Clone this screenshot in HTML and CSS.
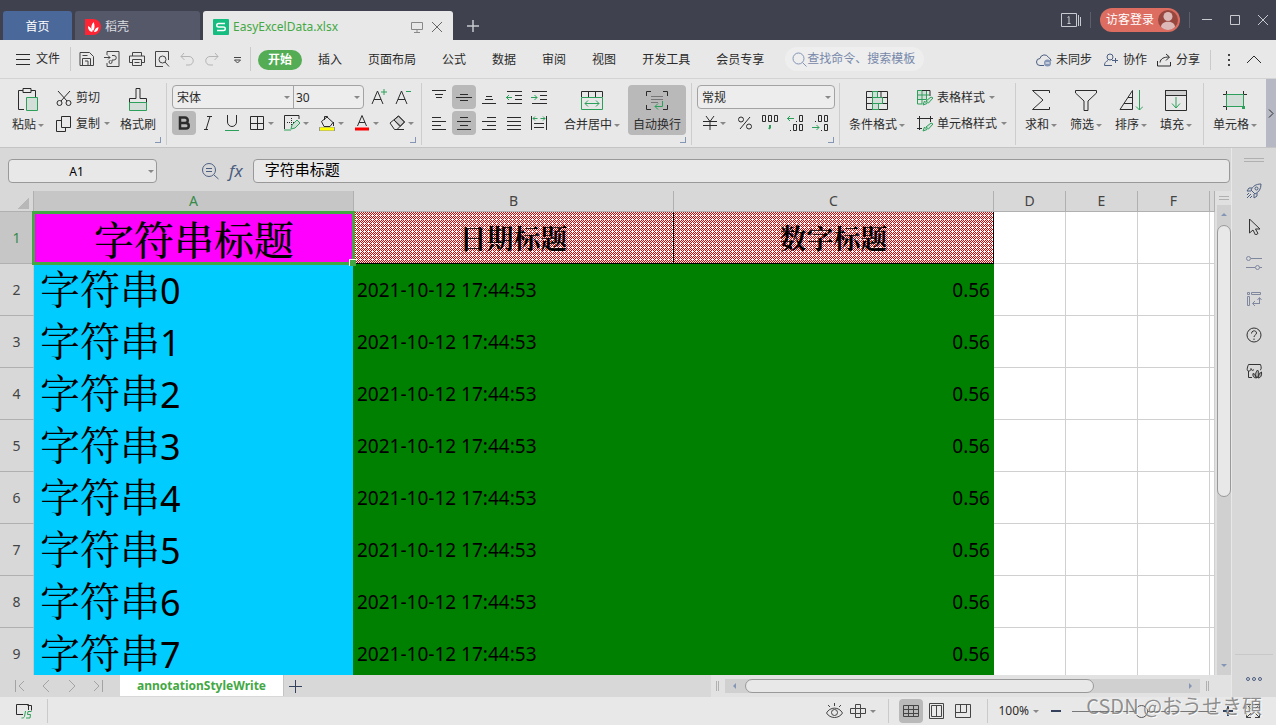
FILE: index.html
```html
<!DOCTYPE html>
<html lang="zh-CN">
<head>
<meta charset="utf-8">
<meta name="viewport" content="width=device-width, initial-scale=1">
<title>EasyExcelData.xlsx</title>
<link rel="stylesheet" href="styles.css">
</head>
<body>
<div class="app">
  <header class="titlebar">
    <nav class="doc-tabs">
      <button class="doc-tab home">首页</button>
      <button class="doc-tab docer">
        <svg class="flat" width="16" height="16" viewBox="0 0 16 16"><path d="M0 0h8a8 8 0 1 1 0 16H0z" fill="#ff2433"/><path d="M8 12C5.500 10 6 6 8.500 3c1.500 3 1.500 6.500-.5 9zM7.500 13C4 12.500 3 10 3 7c2.500 1 4 3 4.500 6zM9 13c.5-2.500 2-4.500 4.500-5 0 3-1.500 5-4.500 5z" fill="#fff"/></svg>
        稻壳
      </button>
      <div class="doc-tab active">
        <svg class="flat" width="16" height="16" viewBox="0 0 16 16"><rect width="16" height="16" rx="1" fill="#15bd80"/><path d="M12 4.500H5.500A1.500 1.500 0 0 0 5.500 8h5a1.500 1.500 0 0 1 0 3.500H4" fill="none" stroke="#fff" stroke-width="1.500"/></svg>
        <span class="doc-name">EasyExcelData.xlsx</span>
        <svg class="muted" width="12" height="12" viewBox="0 0 12 12"><path d="M.5 1.500h11v7H.5zM6 8.500v3M3 11.500h6"/></svg>
        <button class="plain" aria-label="关闭"><svg width="12" height="12" viewBox="0 0 12 12"><path d="M1 1l10 10M11 1L1 11"/></svg></button>
      </div>
      <button class="plain new-tab" aria-label="新建"><svg width="12" height="12" viewBox="0 0 12 12"><path d="M6 0v12M0 6h12" stroke-width="1.500"/></svg></button>
    </nav>
    <div class="window-tools">
      <svg width="20" height="16" viewBox="0 0 20 16"><path d="M.5 1.500h15v13H.5zM17.500 3v11M19.500 5v9M6.500 5.500l1.500-1v6.500M6.500 11.500h3"/></svg>
      <i class="tsep"></i>
      <button class="login">访客登录
        <svg class="flat" width="20" height="20" viewBox="0 0 20 20"><circle cx="10" cy="10" r="10" fill="#98473f"/><circle cx="10" cy="6.500" r="4.500" fill="#dcb9b6"/><path d="M3 17c0-7 14-7 14 0-4 4-10 4-14 0z" fill="#dcb9b6"/></svg>
      </button>
      <i class="tsep"></i>
      <button class="plain win" aria-label="最小化"><svg width="10" height="10" viewBox="0 0 10 10"><path d="M0 4.500h10"/></svg></button>
      <button class="plain win" aria-label="最大化"><svg width="10" height="10" viewBox="0 0 10 10"><path d="M.5.5h9v9h-9z"/></svg></button>
      <button class="plain win" aria-label="关闭窗口"><svg width="10" height="10" viewBox="0 0 10 10"><path d="M0 0l10 10M10 0L0 10"/></svg></button>
    </div>
  </header>

  <div class="menubar">
    <button class="plain file"><svg width="14" height="12" viewBox="0 0 14 12"><path d="M0 1.500h14M0 6.500h14M0 11.500h14"/></svg>文件</button>
    <i class="sep"></i>
    <div class="quick">
      <button class="plain" aria-label="保存"><svg width="16" height="16" viewBox="0 0 16 16"><path d="M1 1.500h9.500l4 4v9H1zM3.500 14V7.500h8V14M3.500 4.500h5M6 10h3v4"/></svg></button>
      <button class="plain" aria-label="输出为PDF"><svg width="16" height="16" viewBox="0 0 16 16"><path d="M3 4V.5h12v15H3V12M0 6.500h6M4 4.500l2 2-2 2M8 4.500h2a2 2 0 0 1 0 4.500H8v2a1.500 1.500 0 1 1-1.500-1.500"/></svg></button>
      <button class="plain" aria-label="打印"><svg width="16" height="16" viewBox="0 0 16 16"><path d="M3.500 5V1.500h9V5M3 11.500H.5V5h15v6.500H13M3.500 8.500h9v6h-9zM5.500 11.500h5"/></svg></button>
      <button class="plain" aria-label="打印预览"><svg width="16" height="16" viewBox="0 0 16 16"><path d="M9 15.500H1.500V.5h13V9"/><circle cx="8.500" cy="8.500" r="3.500"/><path d="M11 11l4 4.500"/></svg></button>
      <button class="plain off" aria-label="撤销"><svg width="16" height="16" viewBox="0 0 16 16"><path d="M5 2L2 5.500 5.500 9M2 5.500h8a4 4 0 0 1 0 8.500H7"/></svg></button>
      <button class="plain off" aria-label="恢复"><svg width="16" height="16" viewBox="0 0 16 16"><path d="M11 2l3 3.500L10.500 9M14 5.500H6A4 4 0 0 0 6 14h3"/></svg></button>
      <button class="plain" aria-label="更多"><svg width="16" height="16" viewBox="0 0 16 16"><path d="M5 6.500h7M5.500 9L8.500 12 11.500 9z"/></svg></button>
    </div>
    <i class="sep"></i>
    <nav class="tabs">
      <button class="plain current">开始</button>
      <button class="plain">插入</button>
      <button class="plain">页面布局</button>
      <button class="plain">公式</button>
      <button class="plain">数据</button>
      <button class="plain">审阅</button>
      <button class="plain">视图</button>
      <button class="plain">开发工具</button>
      <button class="plain">会员专享</button>
    </nav>
    <label class="search"><svg width="15" height="15" viewBox="0 0 15 15"><circle cx="6.500" cy="6.500" r="5.500"/><path d="M10.500 10.500L14.500 14.500"/></svg><input type="text" placeholder="查找命令、搜索模板" aria-label="查找命令、搜索模板"></label>
    <div class="share">
      <button class="plain sync"><svg class="blue" width="16" height="14" viewBox="0 0 16 14"><path d="M8 12.500H4a3.500 3.500 0 0 1 0-7 4.500 4.500 0 0 1 8.500-1A4 4 0 0 1 15 8"/><circle cx="11.500" cy="10" r="3.500" fill="#8495b5" stroke="none"/><path d="M9.500 10h4" stroke="#fff"/></svg>未同步</button>
      <button class="plain"><svg class="blue" width="15" height="14" viewBox="0 0 15 14"><circle cx="6" cy="4" r="3"/><path d="M4 7.500C1.500 8.500.5 10 .5 12.500H8M8 7.500h6M11.500 5v5"/></svg>协作</button>
      <button class="plain"><svg width="15" height="14" viewBox="0 0 15 14"><path d="M.5 8v5h13V9M3 9.500c.5-4 4-5.500 9-5.500M9 1l3.500 3L9 7.500"/></svg>分享</button>
      <i class="sep"></i>
      <button class="plain" aria-label="选项"><svg width="4" height="14" viewBox="0 0 4 14"><path d="M1 1h2v2H1zM1 6h2v2H1zM1 11h2v2H1z" fill="#444" stroke="none"/></svg></button>
      <button class="plain" aria-label="折叠"><svg width="14" height="10" viewBox="0 0 14 10"><path d="M0 8l7-7 7 7"/></svg></button>
    </div>
  </div>

  <div class="ribbon">
    <section class="group clip launch">
      <button class="big"><svg width="24" height="24" viewBox="0 0 24 24"><path d="M8 21.500H2.500v-19H7M15 2.500h4.500V9M7 .5h8v4H7z"/><path class="gs" d="M10.500 9.500h11v13h-11z"/></svg><span>粘贴<b class="caret"></b></span></button>
      <div class="stack">
        <button class="small"><svg width="16" height="16" viewBox="0 0 16 16"><path d="M2 1l9 10M14 1L5 11"/><circle cx="3.500" cy="13" r="2.500"/><circle cx="12.500" cy="13" r="2.500"/></svg>剪切</button>
        <button class="small"><svg width="16" height="16" viewBox="0 0 16 16"><path d="M5.500.5h9v11h-9zM5 4.500H.5v11h9V12"/></svg>复制<b class="caret"></b></button>
      </div>
      <button class="big painter"><svg width="24" height="24" viewBox="0 0 24 24"><path d="M3.500 15v-4.500H10V.5h4v10h6.500V15"/><path class="gs" d="M3.500 14.500h17v8h-17z"/></svg><span>格式刷</span></button>
    </section>

    <section class="group font launch">
      <div class="line">
        <div class="fields">
          <span class="sel fname"><select aria-label="字体"><option>宋体</option></select></span>
          <span class="sel fsize"><select aria-label="字号"><option>30</option></select></span>
        </div>
        <button class="tool" aria-label="增大字号"><svg width="16" height="16" viewBox="0 0 16 16"><path d="M1 15L6.500 2 12 15M3 10.500h7"/><path class="g" d="M10 3h6M13 0v6"/></svg></button>
        <button class="tool" aria-label="减小字号"><svg width="16" height="16" viewBox="0 0 16 16"><path d="M1 15L6.500 2 12 15M3 10.500h7"/><path class="g" d="M11 2.500h5"/></svg></button>
      </div>
      <div class="line">
        <button class="tool on" aria-label="加粗"><svg width="14" height="14" viewBox="0 0 14 14"><path d="M3 1.500h5a2.500 2.500 0 0 1 0 5.500H3zM3 7h6a2.500 2.500 0 0 1 0 5.500H3z" stroke-width="2.500"/></svg></button>
        <button class="tool" aria-label="倾斜"><svg width="14" height="16" viewBox="0 0 14 16"><path d="M6 1.500h5M3 14.500h4M9 1.500L5 14.500"/></svg></button>
        <button class="tool" aria-label="下划线"><svg width="16" height="16" viewBox="0 0 16 16"><path d="M3.500 0v7a4.500 4.500 0 0 0 9 0V0"/><path class="g" d="M1 15.500h14"/></svg></button>
        <button class="tool wide" aria-label="边框"><svg width="16" height="16" viewBox="0 0 16 16"><path d="M1.500 1.500h13v13h-13zM8.500 1v14M1 8.500h14"/></svg><b class="caret"></b></button>
        <button class="tool wide" aria-label="绘制边框"><svg width="16" height="16" viewBox="0 0 16 16"><path d="M.5 14V.5H15V4"/><path d="M3 7.500h7M7.500 3v8" stroke-dasharray="1 1"/><path class="gs" d="M7 14l1-4 5-5 3 3-5 5z"/><path class="g" d="M0 15h7"/></svg><b class="caret"></b></button>
        <button class="tool wide" aria-label="填充颜色"><svg width="16" height="16" viewBox="0 0 16 16"><path d="M2.500 6.500L8 2l6 5.500-3 4H5zM5.500 5V1.500h3V3M14.500 7v4"/><path d="M0 14h16" stroke="#999" stroke-width="4"/><path d="M1 14h14" stroke="#ff0" stroke-width="3"/></svg><b class="caret"></b></button>
        <button class="tool wide" aria-label="字体颜色"><svg width="16" height="16" viewBox="0 0 16 16"><path d="M3.500 11L8 .5l4.500 10.500M5 7.500h6"/><path d="M1 14h14" stroke="#f00" stroke-width="3"/></svg><b class="caret"></b></button>
        <button class="tool wide" aria-label="清除"><svg width="16" height="16" viewBox="0 0 16 16"><path d="M5 5l4.500-4 6 6-4 4z" fill="#d0d0d0"/><path d="M1 8l8.500-7 6 6L8 14.500H5.500zM5 5l6 6.500M8 14.500h7"/></svg><b class="caret"></b></button>
      </div>
    </section>

    <section class="group align launch">
      <div class="pad5">
        <button class="tool" aria-label="顶端对齐"><svg width="16" height="16" viewBox="0 0 16 16"><path d="M1 1.500h14M4 5.500h8M5 8.500h6"/></svg></button>
        <button class="tool on" aria-label="垂直居中"><svg width="16" height="16" viewBox="0 0 16 16"><path d="M4 5.500h8M0 8.500h16M4 11.500h8"/></svg></button>
        <button class="tool" aria-label="底端对齐"><svg width="16" height="16" viewBox="0 0 16 16"><path d="M5 7.500h6M4 10.500h8M1 14.500h14"/></svg></button>
        <button class="tool" aria-label="减少缩进"><svg width="16" height="16" viewBox="0 0 16 16"><path d="M1 2.500h15M9 6.500h7M9 10.500h7M1 14.500h15"/><path class="g" d="M0 8.500h6M3 6L.5 8.500 3 11"/></svg></button>
        <button class="tool" aria-label="增加缩进"><svg width="16" height="16" viewBox="0 0 16 16"><path d="M1 2.500h15M9 6.500h7M9 10.500h7M1 14.500h15"/><path class="g" d="M0 8.500h6M3.500 6L6 8.500 3.500 11"/></svg></button>
        <button class="tool" aria-label="左对齐"><svg width="16" height="16" viewBox="0 0 16 16"><path d="M1 2.500h9M1 6.500h14M1 10.500h9M1 14.500h14"/></svg></button>
        <button class="tool on" aria-label="水平居中"><svg width="16" height="16" viewBox="0 0 16 16"><path d="M4 2.500h8M1 6.500h14M4 10.500h8M1 14.500h14"/></svg></button>
        <button class="tool" aria-label="右对齐"><svg width="16" height="16" viewBox="0 0 16 16"><path d="M6 2.500h9M1 6.500h14M6 10.500h9M1 14.500h14"/></svg></button>
        <button class="tool" aria-label="两端对齐"><svg width="16" height="16" viewBox="0 0 16 16"><path d="M1 2.500h14M1 6.500h14M1 10.500h14M1 14.500h14"/></svg></button>
        <button class="tool" aria-label="分散对齐"><svg width="16" height="16" viewBox="0 0 16 16"><path d="M.5 1v14M15.500 1v14M3 8.500h10M3 12.500h10"/><path class="g" d="M2 3.500h4.500M9.500 3.500H14M4 1.500l-2 2 2 2M12 1.500l2 2-2 2"/></svg></button>
      </div>
      <button class="big merge"><svg width="24" height="24" viewBox="0 0 24 24"><path d="M1.500 9V3.500h21V9M8.500 3.500V9M15.500 3.500V9"/><path class="g" d="M1.500 9.500h21v12h-21zM5 15.500h14M8 12.500l-3 3 3 3M16 12.500l3 3-3 3"/></svg><span>合并居中<b class="caret"></b></span></button>
      <button class="big on"><svg width="24" height="24" viewBox="0 0 24 24"><path d="M1.500 8V3.500H6M18 3.500h4.500V8M1.500 17v4.500H6M18 21.500h4.500V17"/><path d="M6 8.500h12M6 11.500h12M6 14.500h7" stroke="#777"/><path class="g" d="M17.500 13v5.500H10M13 15.500l-3 3 3 3"/></svg><span>自动换行</span></button>
    </section>

    <section class="group number launch">
      <div class="fields"><span class="sel nfmt"><select aria-label="数字格式"><option>常规</option></select></span></div>
      <div class="line">
        <button class="tool wide" aria-label="货币"><svg width="14" height="14" viewBox="0 0 14 14"><path d="M3 0l4 5.500L11 0M0 5.500h14M0 9.500h14M7 5.500V14"/></svg><b class="caret"></b></button>
        <button class="tool" aria-label="百分比"><svg width="14" height="14" viewBox="0 0 14 14"><circle cx="3" cy="3.500" r="2.500"/><circle cx="11" cy="10.500" r="2.500"/><path d="M12 1L2 13"/></svg></button>
        <button class="tool" aria-label="千位分隔"><svg width="18" height="16" viewBox="0 0 18 16"><path d="M1.500.5h3v6h-3zM7.500.5h3v6h-3zM13.500.5h3v6h-3z"/><path class="g" d="M9 10v2.500L8 14" stroke-width="2"/></svg></button>
        <button class="tool" aria-label="增加小数位"><svg width="16" height="16" viewBox="0 0 16 16"><path d="M12.500.5h3v6h-3zM6.500 9.500h3v6h-3zM12.500 9.500h3v6h-3zM9 6.500h1M3 15.500h1"/><path class="g" d="M0 3.500h7M3 1L.5 3.500 3 6"/></svg></button>
        <button class="tool" aria-label="减少小数位"><svg width="16" height="16" viewBox="0 0 16 16"><path d="M6.500.5h3v6h-3zM12.500.5h3v6h-3zM12.500 9.500h3v6h-3zM3 6.500h1M9 15.500h1"/><path class="g" d="M0 12.500h7M4.500 10L7 12.500 4.500 15"/></svg></button>
      </div>
    </section>

    <section class="group styles">
      <button class="big"><svg width="24" height="24" viewBox="0 0 24 24"><path d="M1.500 3.500h21v18h-21zM1.500 9.500h21M1.500 15.500h21M16 3.500v6"/><path class="gs" d="M7.500 3.500h5v6h-5zM7.500 9.500h10v6h-10zM7.500 15.500h6v6h-6z"/></svg><span>条件格式<b class="caret"></b></span></button>
      <div class="stack">
        <button class="small"><svg width="16" height="16" viewBox="0 0 16 16"><path class="gs" d="M.5.5h9v9h-9z"/><path class="g" d="M.5.5V14H5M.5 5h12M5 .5V14M9.500.5V9"/><path d="M5 .5h8V6"/><path class="gs" d="M6 15l1.500-4 2.500 2.500zM9 11l5-4 2 1-4.500 5z"/></svg>表格样式<b class="caret"></b></button>
        <button class="small"><svg width="16" height="16" viewBox="0 0 16 16"><path d="M0 2.500h16M2.500 0v14M0 12.500h5M13.500 0v6"/><path class="gs" d="M6 15l1.500-4 2.500 2.500zM9 11l5-4 2 1-4.500 5z"/></svg>单元格样式<b class="caret"></b></button>
      </div>
    </section>

    <section class="group edit">
      <button class="big"><svg width="24" height="24" viewBox="0 0 24 24"><path d="M20.500 5V2.500h-17L14 12 3.500 21.500h17V19"/></svg><span>求和<b class="caret"></b></span></button>
      <button class="big"><svg width="24" height="24" viewBox="0 0 24 24"><path d="M1.500 2.500h21V5L14 13v9.500h-4V13L1.500 5z"/></svg><span>筛选<b class="caret"></b></span></button>
      <button class="big"><svg width="24" height="24" viewBox="0 0 24 24"><path d="M1 21.500L13.500 2.500v19zM9 9.500h4.500M5 15.500h8.500"/><path class="g" d="M20.500 2v20M17 18.500l3.500 3.500 3.500-3.500"/></svg><span>排序<b class="caret"></b></span></button>
      <button class="big"><svg width="24" height="24" viewBox="0 0 24 24"><path d="M1.500 2.500h21v5h-21z" fill="#d0d0d0"/><path d="M1.500 2.500h21v20h-21zM1.500 7.500h21"/><path class="g" d="M12 9v11M8 15.500l4 4.500 4-4.500"/></svg><span>填充<b class="caret"></b></span></button>
    </section>

    <section class="group cells">
      <button class="big"><svg width="24" height="24" viewBox="0 0 24 24"><path d="M0 6.500h24M0 18.500h4M3.500 3v19M20.500 3v5"/><path class="gs" d="M3.500 6.500h17v12h-17z"/><path class="g" d="M19 19.500h3" stroke-width="3"/></svg><span>单元格<b class="caret"></b></span></button>
    </section>
    <button class="more" aria-label="更多功能"><svg width="6" height="9" viewBox="0 0 6 9"><path d="M1 .5l4 4-4 4"/></svg></button>
  </div>

  <div class="body">
    <main class="workspace">
      <div class="formula-row">
        <span class="name-box"><input type="text" value="A1" aria-label="名称框"><b class="caret"></b></span>
        <button class="plain" aria-label="浏览公式结果"><svg class="blue" width="17" height="17" viewBox="0 0 17 17"><circle cx="7" cy="7" r="6.500"/><path d="M12 12l4.500 4M4 5.500h6M4 8.500h6"/></svg></button>
        <button class="plain fx">fx</button>
        <input class="formula" type="text" value="字符串标题" aria-label="编辑栏">
      </div>
      <div class="sheet-area">
        <div class="sheet">
          <table>
            <colgroup><col class="c-head"><col class="c-wide"><col class="c-wide"><col class="c-wide"><col class="c-std"><col class="c-std"><col class="c-std"><col></colgroup>
            <thead><tr><th><i class="corner"></i></th><th class="sel-head">A</th><th>B</th><th>C</th><th>D</th><th>E</th><th>F</th><th></th></tr></thead>
            <tbody>
              <tr><th class="sel-head">1</th><td class="title-a">字符串标题</td><td class="title">日期标题</td><td class="title">数字标题</td><td></td><td></td><td></td><td></td></tr>
              <tr><th>2</th><td class="str">字符串<span>0</span></td><td class="date">2021-10-12 17:44:53</td><td class="num">0.56</td><td></td><td></td><td></td><td></td></tr>
              <tr><th>3</th><td class="str">字符串<span>1</span></td><td class="date">2021-10-12 17:44:53</td><td class="num">0.56</td><td></td><td></td><td></td><td></td></tr>
              <tr><th>4</th><td class="str">字符串<span>2</span></td><td class="date">2021-10-12 17:44:53</td><td class="num">0.56</td><td></td><td></td><td></td><td></td></tr>
              <tr><th>5</th><td class="str">字符串<span>3</span></td><td class="date">2021-10-12 17:44:53</td><td class="num">0.56</td><td></td><td></td><td></td><td></td></tr>
              <tr><th>6</th><td class="str">字符串<span>4</span></td><td class="date">2021-10-12 17:44:53</td><td class="num">0.56</td><td></td><td></td><td></td><td></td></tr>
              <tr><th>7</th><td class="str">字符串<span>5</span></td><td class="date">2021-10-12 17:44:53</td><td class="num">0.56</td><td></td><td></td><td></td><td></td></tr>
              <tr><th>8</th><td class="str">字符串<span>6</span></td><td class="date">2021-10-12 17:44:53</td><td class="num">0.56</td><td></td><td></td><td></td><td></td></tr>
              <tr><th>9</th><td class="str">字符串<span>7</span></td><td class="date">2021-10-12 17:44:53</td><td class="num">0.56</td><td></td><td></td><td></td><td></td></tr>
            </tbody>
          </table>
        </div>
        <div class="vscroll">
          <i class="hgrip"></i>
          <div class="vtrack"><i class="arrow up"></i><i class="vthumb"></i><i class="arrow down"></i></div>
        </div>
      </div>
      <div class="sheet-bar">
        <div class="sheet-nav">
          <button class="plain" aria-label="第一张"><svg width="10" height="12" viewBox="0 0 10 12"><path d="M.5 0v12M9 1L4 6l5 5"/></svg></button>
          <button class="plain" aria-label="上一张"><svg width="10" height="12" viewBox="0 0 10 12"><path d="M8 0L2 6l6 6"/></svg></button>
          <button class="plain" aria-label="下一张"><svg width="10" height="12" viewBox="0 0 10 12"><path d="M2 0l6 6-6 6"/></svg></button>
          <button class="plain" aria-label="最后一张"><svg width="10" height="12" viewBox="0 0 10 12"><path d="M9.500 0v12M1 1l5 5-5 5"/></svg></button>
        </div>
        <button class="sheet-tab">annotationStyleWrite</button>
        <button class="plain add" aria-label="新建工作表"><svg width="13" height="13" viewBox="0 0 13 13"><path d="M6.500 0v13M0 6.500h13"/></svg></button>
        <div class="hscroll">
          <i class="vgrip"></i>
          <div class="htrack"><i class="arrow left"></i><i class="hthumb"></i><i class="arrow right"></i></div>
          <i class="vgrip"></i>
        </div>
      </div>
    </main>
    <aside class="side">
      <i class="side-grip"></i>
      <button class="plain" aria-label="快捷"><svg class="blue" width="16" height="16" viewBox="0 0 16 16"><path d="M15 1C10 1 7 3 5 7l4 4c4-2 6-5 6-10zM6 5H3L1 8h4M11 10v3l-3 2v-4M5 11l-4 4M3 10l-2 2M6 13l-2 2"/><circle cx="10.500" cy="5.500" r="1.500"/></svg></button>
      <button class="plain" aria-label="选择"><svg width="16" height="16" viewBox="0 0 16 16"><path d="M3.500 0v14l3.500-3 2.500 5 2.500-1.500L9.500 10H14z"/></svg></button>
      <button class="plain soft" aria-label="属性"><svg width="16" height="16" viewBox="0 0 16 16"><circle cx="2.500" cy="3.500" r="2"/><path d="M5 3.500h11M0 12.500h9M13.500 12.500H16"/><circle cx="11.500" cy="12.500" r="2"/></svg></button>
      <button class="plain soft" aria-label="分析"><svg width="16" height="16" viewBox="0 0 16 16"><path d="M1.500 1.500h2v2h-2zM5.500 1.500h9v2h-9zM1.500 5.500h2v9h-2zM13.500 13V7M11.500 9l2-2.500 2 2.500M13.500 12.500H7M9 10l-2.500 2.500L9 15"/></svg></button>
      <button class="plain" aria-label="帮助"><svg width="16" height="16" viewBox="0 0 16 16"><circle cx="8" cy="8" r="7"/><path d="M5.500 6.500C5.500 3 10.500 3 10.500 6c0 2-2.500 2-2.500 4M8 11.500V13"/></svg></button>
      <button class="plain" aria-label="资源"><svg width="17" height="16" viewBox="0 0 17 16"><path d="M6 14.500H2.500V8M14 7c1.500 0 1.500-3 .5-5.500h-12C1 5 .5 8 2.500 8S5 7 5 5.500C5 7.500 7 8 8 6.500"/><path d="M11 15c-3-2-1.500-5 .5-8 2 2 1.500 6-.5 8zM10.500 15c-3 0-4-2-3.500-4.500 2 .5 3 2 3.500 4.500zM12 15c3 0 4-3 3.500-6-2 1-3 3-3.500 6z" fill="#aaa"/></svg></button>
      <span class="side-end"><button class="plain" aria-label="更多"><svg class="blue" width="16" height="6" viewBox="0 0 16 6"><circle cx="2" cy="3" r="1.500"/><circle cx="8" cy="3" r="1.500"/><circle cx="14" cy="3" r="1.500"/></svg></button></span>
    </aside>
  </div>

  <footer class="status">
    <button class="plain macro" aria-label="宏"><svg width="18" height="16" viewBox="0 0 18 16"><path d="M8 11.500H1.500V1.500h12V7M12.500 2.500h4v5"/><path class="g" d="M10.500 8l-1 5.500c-.5 1.500-1.500 1.500-3 1.500M16.500 8.500h-3.500l-.5 3h3l-.5 3.500H11"/></svg></button>
    <i class="sep"></i>
    <div class="views">
      <button class="plain" aria-label="护眼模式"><svg width="17" height="16" viewBox="0 0 17 16"><path d="M.5 10C4 3.500 13 3.500 16.500 10 13 16 4 16 .5 10zM8.500 0v3M2 2l2 2M15 2l-2 2"/><circle cx="8.500" cy="9.500" r="3"/></svg></button>
      <button class="plain" aria-label="阅读模式"><svg width="16" height="16" viewBox="0 0 16 16"><path d="M5.500 1.500h5v4h5v5h-5v4h-5v-4h-5v-5h5zM5.500 5.500h5v5h-5z"/></svg><b class="caret"></b></button>
      <i class="sep"></i>
      <button class="tool on" aria-label="普通视图"><svg width="16" height="14" viewBox="0 0 16 14"><path d="M.5 1.500h15v11H.5zM.5 5.500h15M.5 9.500h15M5.500 1.500v11M10.500 1.500v11"/></svg></button>
      <button class="tool" aria-label="页面布局"><svg width="16" height="16" viewBox="0 0 16 16"><path d="M.5.5h14v15H.5zM2.500 2.500h10v11h-10zM7.500 2.500v11"/></svg></button>
      <button class="tool" aria-label="分页预览"><svg width="16" height="14" viewBox="0 0 16 14"><path d="M.5.5h15v13H.5zM.5 8.500h11V.5M5.500.5v8"/></svg></button>
      <i class="sep"></i>
      <button class="plain pct">100%<b class="caret"></b></button>
      <button class="plain blue" aria-label="缩小"><svg width="10" height="10" viewBox="0 0 10 10"><path d="M0 5h10" stroke-width="2"/></svg></button>
      <input class="zoom" type="range" min="0" max="100" value="48" aria-label="缩放">
      <button class="plain blue" aria-label="放大"><svg width="10" height="10" viewBox="0 0 10 10"><path d="M0 5h10M5 0v10" stroke-width="2"/></svg></button>
      <button class="plain full" aria-label="全屏"><svg width="14" height="14" viewBox="0 0 14 14"><path d="M.5 5V.5H5M.5.5L5 5M9 .5h4.500V5M13.500.5L9 5M.5 9v4.500H5M.5 13.500L5 9M13.500 9v4.500H9M13.500 13.500L9 9"/></svg></button>
    </div>
  </footer>
  <div class="watermark">CSDN @おうせき碩</div>
</div>
</body>
</html>
```

FILE: styles.css
```css
* { box-sizing: border-box; }

body {
  margin: 0;
  font: 12px/16px "Noto Sans", "Noto Sans CJK SC", sans-serif;
  color: #2b2b2b;
}

button, input, select {
  margin: 0;
  padding: 0;
  border: 0;
  border-radius: 0;
  background: none;
  font: inherit;
  color: inherit;
  outline: 0;
}

svg {
  display: block;
  flex: none;
  fill: none;
  stroke: currentColor;
}

.flat { stroke: none; }
.g { stroke: #2ca05a; }
.gs { stroke: #2ca05a; fill: #d3ded8; }
.blue { color: #4b5e80; }
.muted { color: #888; }

.app {
  display: flex;
  flex-direction: column;
  height: 100vh;
  overflow: hidden;
  background: #e8e8e8;
}

.plain {
  display: flex;
  align-items: center;
  justify-content: center;
  white-space: nowrap;
}

.caret {
  flex: none;
  border: 3px solid transparent;
  border-top-color: #888;
  border-bottom: 0;
}

.sep {
  flex: none;
  width: 1px;
  height: 24px;
  background: #cacaca;
}

/* Title bar */
.titlebar {
  display: flex;
  flex: none;
  justify-content: space-between;
  height: 40px;
  background: #3f424e;
  color: #c9cad0;
}

.doc-tabs {
  display: flex;
  align-items: flex-end;
  padding-left: 3px;
  gap: 3px;
}

.doc-tab {
  display: flex;
  align-items: center;
  height: 29px;
  padding-top: 2px;
  border-radius: 3px 3px 0 0;
}

.doc-tab.home {
  width: 69px;
  justify-content: center;
  background: #4a6899;
  color: #fff;
}

.doc-tab.docer {
  width: 125px;
  padding-left: 10px;
  gap: 4px;
  background: #545868;
  color: #dcdde2;
}

.doc-tab.active {
  width: 250px;
  padding: 2px 10px 0;
  gap: 4px;
  background: #e8e8e8;
  color: #666;
}

.doc-tab .muted { margin-right: 4px; }

.doc-name {
  flex: 1;
  color: #43a843;
}

.new-tab {
  width: 34px;
  height: 28px;
}

.window-tools {
  display: flex;
  align-items: center;
  gap: 9px;
  padding-right: 8px;
}

.tsep {
  width: 1px;
  height: 16px;
  background: #5c5f6b;
}

.login {
  display: flex;
  align-items: center;
  gap: 4px;
  height: 24px;
  padding: 0 2px 0 6px;
  border-radius: 12px;
  background: #dd6d61;
  color: #fff;
}

.win {
  width: 10px;
  margin-left: 9px;
}

.tsep + .win { margin-left: 3px; }

/* Menu bar */
.menubar {
  display: flex;
  flex: none;
  align-items: center;
  height: 39px;
  padding-left: 16px;
  border-bottom: 1px solid #d3d3d3;
}

.file {
  gap: 6px;
  margin-right: 10px;
}

.quick {
  display: flex;
  gap: 9px;
  padding: 0 5px 0 8px;
  color: #444;
}

.off { color: #b4b4b4; }

.tabs {
  display: flex;
  align-items: center;
  gap: 26px;
  margin-left: 7px;
  padding-top: 1px;
}

.current {
  height: 20px;
  margin-right: -10px;
  padding: 0 10px;
  border-radius: 10px;
  background: #54ad54;
  color: #fff;
  font-weight: bold;
}

.search {
  display: flex;
  align-items: center;
  width: 139px;
  height: 24px;
  margin-left: 21px;
  padding-left: 7px;
  border-radius: 12px;
  background: #eee;
  color: #8495b5;
}

.search input {
  flex: 1;
  min-width: 0;
}

.search input::placeholder {
  color: #7788aa;
  opacity: 1;
}

.share {
  display: flex;
  align-items: center;
  gap: 10px;
  margin-left: auto;
  padding: 1px 15px 0 0;
}

.share .plain { gap: 4px; }
.share .sync { margin-right: 2px; }
.share .sep { height: 20px; }
.share .sep ~ .plain { margin-left: 6px; }

/* Ribbon */
.ribbon {
  display: flex;
  flex: none;
  align-items: stretch;
  height: 69px;
  border-bottom: 1px solid #c4c4c4;
}

.group {
  position: relative;
  display: flex;
  flex: none;
  padding: 6px 5px 12px;
}

.group::before {
  content: "";
  position: absolute;
  top: 4px;
  right: 0;
  bottom: 2px;
  width: 1px;
  background: #cdcdcd;
}

.group.cells::before { display: none; }

.launch::after {
  content: "";
  position: absolute;
  right: 6px;
  bottom: 4px;
  width: 5px;
  height: 5px;
  border: solid #8495b5;
  border-width: 0 1px 1px 0;
}

.big {
  display: flex;
  flex-direction: column;
  align-items: center;
  justify-content: space-between;
  height: 50px;
  padding: 3px 4px 2px;
  border-radius: 4px;
  white-space: nowrap;
}

.big span, .small {
  display: flex;
  align-items: center;
}

.big .caret { margin-left: 2px; }

.on { background: #b9b9b9; }
.big.on { padding: 3px 5px 2px; }

.stack {
  display: flex;
  flex-direction: column;
  gap: 2px;
}

.small {
  gap: 4px;
  height: 24px;
  padding-top: 1px;
  white-space: nowrap;
}

.tool {
  display: flex;
  flex: none;
  align-items: center;
  justify-content: center;
  width: 24px;
  height: 24px;
  border-radius: 4px;
}

.tool.wide {
  width: 35px;
  gap: 3px;
}

.line { display: flex; }

.clip {
  gap: 8px;
  width: 167px;
  padding-left: 8px;
}

.painter { margin-left: -2px; }

.font, .number {
  flex-direction: column;
  gap: 2px;
}

.font {
  width: 255px;
}

.fields {
  display: flex;
  height: 24px;
  border: 1px solid #a3a3a3;
  border-radius: 4px;
  background: #ededed;
}

.font .fields {
  width: 192px;
  margin-right: 3px;
}

.sel {
  position: relative;
  display: flex;
}

.sel::after {
  content: "";
  position: absolute;
  right: 3px;
  top: 10px;
  border: 3px solid transparent;
  border-top-color: #888;
  border-bottom: 0;
  pointer-events: none;
}

.sel select {
  width: 100%;
  padding: 1px 0 0 4px;
  appearance: none;
}

.fname { flex: 1; }

.fsize {
  width: 70px;
  border-left: 1px solid #a3a3a3;
}

.fsize select { padding-left: 2px; }

.nfmt { flex: 1; }

.align { width: 270px; }

.pad5 {
  display: grid;
  grid-template-columns: repeat(5, 24px);
  gap: 2px 1px;
}

.merge {
  margin-left: 9px;
  margin-right: 4px;
}

.number { width: 148px; }
.number .line { gap: 1px; }

.styles {
  gap: 8px;
  width: 176px;
}

.edit {
  gap: 5px;
  width: 188px;
}

.more {
  display: flex;
  align-items: center;
  justify-content: center;
  width: 13px;
  margin-left: auto;
  background: #b6b9c4;
}

/* Workspace */
.body {
  display: flex;
  flex: 1;
  min-height: 0;
  background: #d8d8d8;
}

.workspace {
  display: flex;
  flex: 1;
  flex-direction: column;
  min-width: 0;
}

.formula-row {
  display: flex;
  flex: none;
  align-items: center;
  gap: 10px;
  height: 43px;
  padding: 3px 1px 0 8px;
}

.name-box {
  display: flex;
  align-items: center;
  width: 149px;
  height: 24px;
  margin-right: 35px;
  padding-right: 2px;
  border: 1px solid #999;
  border-radius: 4px;
  background: #e8e8e8;
}

.name-box input {
  flex: 1;
  min-width: 0;
  padding: 2px 4px 0 0;
  text-align: center;
  color: #000;
}

.fx {
  font: italic 17px/20px "Noto Sans", sans-serif;
  color: #4b5e80;
}

.formula {
  flex: 1;
  height: 24px;
  padding: 0 11px 5px;
  border: 1px solid #999;
  border-radius: 4px;
  background: #e8e8e8;
  font-size: 15px;
  color: #000;
}

.sheet-area {
  display: flex;
  flex: 1;
  min-height: 0;
}

.sheet {
  flex: 1;
  min-width: 0;
  overflow: hidden;
  background: #fff;
}

table {
  width: 100%;
  border-collapse: separate;
  border-spacing: 0;
  table-layout: fixed;
}

.c-head { width: 34px; }
.c-wide { width: 320px; }
.c-std { width: 72px; }

th {
  padding: 0;
  border: solid #b0b0b0;
  border-width: 0 1px 1px 0;
  background: #d8d8d8;
  font-size: 14px;
  font-weight: normal;
  color: #444;
}

thead th {
  height: 21px;
  line-height: 20px;
}

tbody th { border-right-color: #c8c8c8; }

.sel-head {
  background: #c6c6c6;
  color: #388a4b;
}

.corner {
  display: block;
  width: 12px;
  height: 12px;
  margin: 3px 4px 0 auto;
  background: linear-gradient(135deg, transparent 50%, #b8b8b8 50%);
}

td {
  height: 52px;
  padding: 0 4px;
  border: solid #d0d0d0;
  border-width: 0 1px 1px 0;
  font-size: 19px;
  line-height: 24px;
  white-space: nowrap;
  color: #000;
}

.title-a {
  position: relative;
  border: 0;
  background: #f0f;
  font: 500 40px/40px "Noto Serif CJK SC", "Noto Sans CJK SC", serif;
  text-align: center;
}

.title-a::before {
  content: "";
  position: absolute;
  inset: -1px -1px -1px -2px;
  border: 3px solid #43a843;
}

.title-a::after {
  content: "";
  position: absolute;
  right: -2px;
  bottom: -2px;
  width: 6px;
  height: 6px;
  border: solid #fff;
  border-width: 1px 0 0 1px;
  background: #43a843;
}

/* Dotted red fill of the header cells */
.title {
  border-color: #000;
  background: #fff url("data:image/svg+xml,%3Csvg xmlns='http://www.w3.org/2000/svg' width='4' height='4' shape-rendering='crispEdges'%3E%3Cpath fill='%23e00000' d='M1 0h1v1H1zM3 0h1v1H3zM0 1h1v1H0zM2 1h1v1H2zM1 2h1v1H1zM3 2h1v1H3zM0 3h1v1H0z'/%3E%3C/svg%3E");
  font: bold 27px/32px "Noto Serif CJK SC", "Noto Sans CJK SC", serif;
  text-align: center;
}

.str {
  padding: 0 0 4px 6px;
  border: 0;
  border-right: 1px solid #008000;
  background: #0cf;
  font: 400 40px/40px "Noto Serif CJK SC", "Noto Sans CJK SC", serif;
}

.str span { font: 36px/36px "Noto Sans", sans-serif; }

.date, .num {
  border: 0;
  background: #008000;
}

.date { padding-left: 3px; }
.num { text-align: right; }

/* Scroll bars */
.vscroll {
  display: flex;
  flex: none;
  flex-direction: column;
  gap: 5px;
  width: 16px;
  padding: 5px 0 0 2px;
  background: #e0e0e0;
}

.hgrip, .side-grip {
  flex: none;
  width: 10px;
  height: 4px;
  margin: 0 auto;
  border: solid #b0b0b0;
  border-width: 1px 0;
}

.vtrack {
  display: flex;
  flex: 1;
  flex-direction: column;
  align-items: center;
  justify-content: space-between;
  padding: 8px 0;
  background: #d0d0d0;
}

.vthumb {
  flex: 0 0 60%;
  width: 14px;
  margin-top: 9px;
  margin-bottom: auto;
  border: 1px solid #999;
  border-radius: 7px;
  background: #e8e8e8;
}

.arrow {
  flex: none;
  border: 3px solid transparent;
}

.up { border-bottom-color: #8495b5; border-top: 0; }
.down { border-top-color: #8495b5; border-bottom: 0; }
.left { border-right-color: #8495b5; border-left: 0; }
.right { border-left-color: #8495b5; border-right: 0; }

.sheet-bar {
  display: flex;
  flex: none;
  height: 22px;
}

.sheet-nav {
  display: flex;
  gap: 16px;
  padding: 0 17px 0 15px;
  color: #a3a3a3;
}

.sheet-tab {
  height: 21px;
  padding: 1px 17px 0;
  background: #fff;
  border-right: 1px solid #c4c4c4;
  color: #43a843;
  font-weight: bold;
}

.add {
  padding: 0 5px;
  color: #33415c;
}

.hscroll {
  display: flex;
  flex: 0 0 520px;
  align-items: center;
  gap: 6px;
  margin-left: auto;
  padding: 0 22px 0 5px;
  background: #e2e2e2;
}

.vgrip {
  width: 3px;
  height: 10px;
  border: solid #b0b0b0;
  border-width: 0 1px;
}

.htrack {
  display: flex;
  flex: 1;
  align-items: center;
  height: 14px;
  padding: 0 8px;
  background: #d0d0d0;
}

.hthumb {
  flex: 0 0 76%;
  height: 14px;
  margin: 0 auto 0 9px;
  border: 1px solid #999;
  border-radius: 7px;
  background: #e8e8e8;
}

/* Side panel */
.side {
  display: flex;
  flex: none;
  flex-direction: column;
  align-items: center;
  gap: 20px;
  width: 45px;
  padding-top: 10px;
  border-left: 1px solid #e8e8e8;
  color: #333;
}

.side-grip {
  width: 20px;
  margin-bottom: 1px;
}

.soft { color: #8088a0; }

.side-end {
  width: 38px;
  margin-top: auto;
  padding: 21px 11px 15px;
  border-top: 1px solid #c8c8c8;
}

/* Status bar */
.status {
  display: flex;
  flex: none;
  align-items: center;
  height: 28px;
}

.macro { width: 47px; }

.views {
  display: flex;
  align-items: center;
  gap: 7px;
  margin-left: auto;
  padding-right: 16px;
  color: #444;
}

.views .caret { margin-left: 4px; }
.views .tool { margin-right: -5px; }
.views .tool + .sep { margin-left: 10px; }
.views .plain + .sep { margin: 0 3px 0 5px; }

.pct {
  margin: 0 5px 0 3px;
  color: #2b2b2b;
}

.views .blue { color: #33415c; }
.full { margin-left: 6px; }

.zoom {
  width: 144px;
  height: 16px;
  margin: 0 0 0 4px;
  appearance: none;
  background: linear-gradient(#777, #777) center / 100% 1px no-repeat;
}

.zoom::-webkit-slider-thumb {
  appearance: none;
  width: 13px;
  height: 13px;
  border: 1px solid #555;
  border-radius: 50%;
  background: #e8e8e8;
}

.watermark {
  position: absolute;
  right: 14px;
  bottom: 5px;
  font: 20px/28px "Noto Sans CJK JP", sans-serif;
  color: rgba(110, 110, 110, .75);
  text-shadow: 1px 1px 0 rgba(255, 255, 255, .8);
  pointer-events: none;
}
```
